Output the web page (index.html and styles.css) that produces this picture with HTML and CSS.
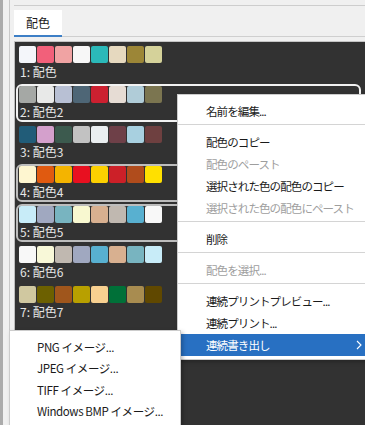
FILE: index.html
```html
<!DOCTYPE html>
<html lang="ja">
<head>
    <meta charset="UTF-8">
    <title>配色</title>
    <link rel="stylesheet" href="styles.css">
</head>
<body>
    <div class="app">
        <div class="app-edge"></div>
        <div class="app-main">
            <div class="top-rule"></div>
            <div class="tabs">
                <div class="tab active">配色</div>
            </div>

            <div class="palette-list">
                <div class="scheme">
                    <div class="swatches">
                        <span class="sw" style="background:#f4f6fa"></span>
                        <span class="sw" style="background:#f2607a"></span>
                        <span class="sw" style="background:#f0a3a3"></span>
                        <span class="sw" style="background:#f7f7f7"></span>
                        <span class="sw" style="background:#2bb9b9"></span>
                        <span class="sw" style="background:#e6d9bf"></span>
                        <span class="sw" style="background:#9c8637"></span>
                        <span class="sw" style="background:#d5d29a"></span>
                    </div>
                    <div class="scheme-name">1: 配色</div>
                </div>
                <div class="scheme selected">
                    <div class="swatches">
                        <span class="sw" style="background:#a5a8a5"></span>
                        <span class="sw" style="background:#e8e9e8"></span>
                        <span class="sw" style="background:#b8c0d4"></span>
                        <span class="sw" style="background:#4e6676"></span>
                        <span class="sw" style="background:#cc2030"></span>
                        <span class="sw" style="background:#e6dcd4"></span>
                        <span class="sw" style="background:#b0ccd8"></span>
                        <span class="sw" style="background:#7b7550"></span>
                    </div>
                    <div class="scheme-name">2: 配色2</div>
                </div>
                <div class="scheme">
                    <div class="swatches">
                        <span class="sw" style="background:#215c78"></span>
                        <span class="sw" style="background:#d4a0cc"></span>
                        <span class="sw" style="background:#3c5a4e"></span>
                        <span class="sw" style="background:#c2c2c2"></span>
                        <span class="sw" style="background:#eaeef0"></span>
                        <span class="sw" style="background:#6e4048"></span>
                        <span class="sw" style="background:#a8d0e0"></span>
                        <span class="sw" style="background:#6e4040"></span>
                    </div>
                    <div class="scheme-name">3: 配色3</div>
                </div>
                <div class="scheme marked">
                    <div class="swatches">
                        <span class="sw" style="background:#fef6d0"></span>
                        <span class="sw" style="background:#e05a10"></span>
                        <span class="sw" style="background:#f4b400"></span>
                        <span class="sw" style="background:#e81020"></span>
                        <span class="sw" style="background:#fcd000"></span>
                        <span class="sw" style="background:#cc2028"></span>
                        <span class="sw" style="background:#b04c1c"></span>
                        <span class="sw" style="background:#ffe000"></span>
                    </div>
                    <div class="scheme-name">4: 配色4</div>
                </div>
                <div class="scheme marked">
                    <div class="swatches">
                        <span class="sw" style="background:#c8ecf8"></span>
                        <span class="sw" style="background:#a0a8c0"></span>
                        <span class="sw" style="background:#78b4c0"></span>
                        <span class="sw" style="background:#f8f8d0"></span>
                        <span class="sw" style="background:#d8b090"></span>
                        <span class="sw" style="background:#c0b8b0"></span>
                        <span class="sw" style="background:#58b0d0"></span>
                        <span class="sw" style="background:#f8f8f8"></span>
                    </div>
                    <div class="scheme-name">5: 配色5</div>
                </div>
                <div class="scheme">
                    <div class="swatches">
                        <span class="sw" style="background:#f8f8f8"></span>
                        <span class="sw" style="background:#f8f8d8"></span>
                        <span class="sw" style="background:#c0b8b0"></span>
                        <span class="sw" style="background:#a0a8c0"></span>
                        <span class="sw" style="background:#58b0d0"></span>
                        <span class="sw" style="background:#d8b090"></span>
                        <span class="sw" style="background:#78b4c0"></span>
                        <span class="sw" style="background:#c8ecf8"></span>
                    </div>
                    <div class="scheme-name">6: 配色6</div>
                </div>
                <div class="scheme">
                    <div class="swatches">
                        <span class="sw" style="background:#d0c8a0"></span>
                        <span class="sw" style="background:#6c6000"></span>
                        <span class="sw" style="background:#a0561c"></span>
                        <span class="sw" style="background:#b8a000"></span>
                        <span class="sw" style="background:#f8d090"></span>
                        <span class="sw" style="background:#007038"></span>
                        <span class="sw" style="background:#a88c50"></span>
                        <span class="sw" style="background:#604800"></span>
                    </div>
                    <div class="scheme-name">7: 配色7</div>
                </div>
            </div>
        </div>
    </div>

    <div class="menu context-menu">
        <div class="menu-item">名前を編集...</div>
        <div class="menu-sep"></div>
        <div class="menu-item">配色のコピー</div>
        <div class="menu-item disabled">配色のペースト</div>
        <div class="menu-item">選択された色の配色のコピー</div>
        <div class="menu-item disabled">選択された色の配色にペースト</div>
        <div class="menu-sep"></div>
        <div class="menu-item">削除</div>
        <div class="menu-sep"></div>
        <div class="menu-item disabled">配色を選択...</div>
        <div class="menu-sep"></div>
        <div class="menu-item">連続プリントプレビュー...</div>
        <div class="menu-item">連続プリント...</div>
        <div class="menu-item active">
            <span>連続書き出し</span>
            <svg class="menu-arrow" width="6" height="10" viewBox="0 0 6 10">
                <path d="M1 1 L5 5 L1 9" fill="none" stroke="#fff" stroke-width="1.1"/>
            </svg>
        </div>
    </div>

    <div class="menu submenu">
        <div class="menu-item">PNG イメージ...</div>
        <div class="menu-item">JPEG イメージ...</div>
        <div class="menu-item">TIFF イメージ...</div>
        <div class="menu-item">Windows BMP イメージ...</div>
    </div>
</body>
</html>
```

FILE: styles.css
```css
* {
    box-sizing: border-box;
    margin: 0;
    padding: 0;
}

html,
body {
    width: 365px;
    height: 425px;
    overflow: hidden;
}

body {
    position: relative;
    background: #f0f0f0;
    font-family: "Noto Sans CJK JP", sans-serif;
    font-size: 12px;
    color: #1a1a1a;
}

.app {
    display: flex;
    height: 425px;
}

.app-edge {
    width: 3px;
    background: #ababab;
}

.app-main {
    flex: 1;
    display: flex;
    flex-direction: column;
    margin-left: 6px;
    padding-left: 4px;
    border-left: 1px solid #c9c9c9;
}

.top-rule {
    height: 6px;
    border-bottom: 1px solid #cdcdcd;
}

.tabs {
    display: flex;
    height: 27px;
    margin-top: 4px;
    border-bottom: 1px solid #cfcfcf;
}

.tab {
    width: 48px;
    height: 27px;
    line-height: 25px;
    text-align: center;
    background: #fff;
    border-bottom: 2px solid #3d7fc6;
}

.palette-list {
    flex: 1;
    margin-top: 4px;
    padding: 2px 4px 0 1px;
    background: #323232;
    border-top: 1px solid #c4c4c4;
    border-left: 1px solid #bdbdbd;
}

.scheme {
    height: 38px;
    margin-bottom: 2px;
    padding: 0 1px;
    border: 2px solid transparent;
    border-radius: 6px;
}

.scheme.selected {
    border-color: #f2f2f2;
}

.scheme.marked {
    border-color: #bdbdbd;
}

.swatches {
    display: flex;
    gap: 1px;
}

.sw {
    width: 17px;
    height: 17px;
    border-radius: 2px;
}

.scheme-name {
    margin-top: 1px;
    padding-left: 1px;
    line-height: 16px;
    color: #e6e6e6;
}

/* popup menus */
.menu {
    position: absolute;
    background: #fff;
    border: 1px solid #cccccc;
    box-shadow: 2px 2px 4px rgba(0,0,0,0.25);
    font-size: 11.5px;
}

.context-menu {
    left: 177px;
    top: 94px;
    width: 190px;
    padding: 5px 0 3px;
    letter-spacing: -0.9px;
}

.menu-item {
    display: flex;
    align-items: center;
    justify-content: space-between;
    height: 22px;
    padding: 0 4px 0 28px;
    white-space: nowrap;
}

.menu-item.disabled {
    color: #9e9e9e;
}

.menu-item.active {
    background: #2870c2;
    color: #fff;
}

.menu-sep {
    height: 1px;
    margin: 2px 0 6px;
    background: #d4d4d4;
}

.submenu {
    left: 9px;
    top: 330px;
    width: 172px;
    height: 120px;
    padding-top: 5px;
    letter-spacing: -0.4px;
    z-index: 2;
}

.submenu .menu-item {
    height: 21.5px;
    padding-left: 27px;
}
```
